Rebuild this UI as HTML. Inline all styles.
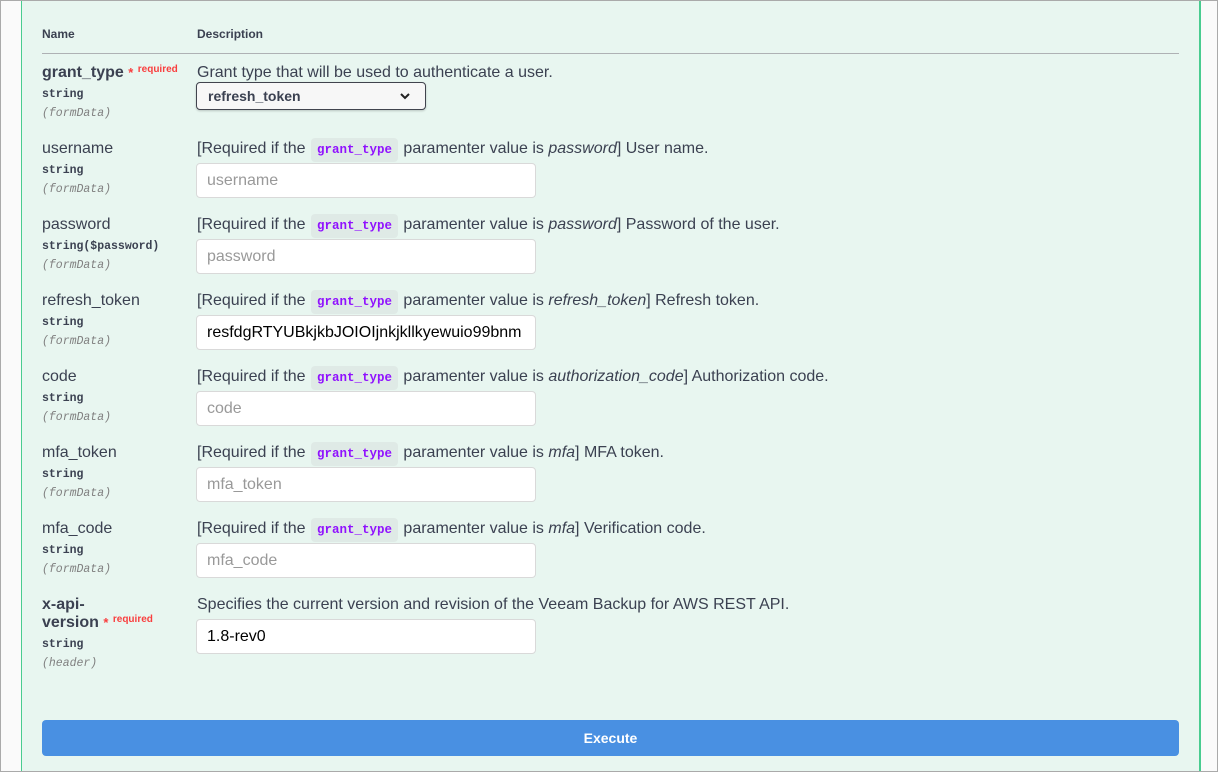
<!DOCTYPE html>
<html><head><style>
body{margin:0;width:1218px;height:772px;position:relative;overflow:hidden;background:#fafafa;font-family:"Liberation Sans",sans-serif;color:#3b4151}
.frame{position:absolute;left:0;top:0;width:1216px;height:770px;border:1px solid #aaa;}
.panel{position:absolute;left:21px;top:1px;width:1177px;height:770px;background:#e8f6f0;border-left:1px solid #49cc90;border-right:2px solid #49cc90}
.a{position:absolute;white-space:nowrap}
.h{font-size:12px;font-weight:bold;top:27px}
.nm{font-size:16px;left:42px}
.b{font-weight:bold}
.t{font-family:"Liberation Mono",monospace;font-size:11.5px;font-weight:bold;left:42px;color:#3b4151}
.f{font-family:"Liberation Mono",monospace;font-size:11.5px;font-style:italic;left:42px;color:#808080}
.d{font-size:16px;left:197px}
.code{display:inline-block;background:#dfeae6;border-radius:4px;padding:4px 6px;font-family:"Liberation Mono",monospace;font-size:12.5px;font-weight:bold;color:#9012fe;margin:0 1px;line-height:16px}
.in{position:absolute;left:196px;width:328px;height:33px;background:#fff;border:1px solid #d9d9d9;border-radius:4px;font-size:16px;padding-left:10px;line-height:33px;color:#999}
.v{color:#000}
.req{font-size:10px;color:#f93e3e;vertical-align:top}
.star{color:#f93e3e;font-size:13px}
</style></head><body>
<div class="frame"></div>
<div class="panel"></div>
<div class="a h" style="left:42px">Name</div>
<div class="a h" style="left:197px">Description</div>
<div class="a" style="left:42px;top:53px;width:1137px;height:1px;background:#aeb1b4"></div>

<div class="a nm b" style="top:64px">grant_type <span class="star">*</span> <span class="req">required</span></div>
<div class="a t" style="top:88px">string</div>
<div class="a f" style="top:107px">(formData)</div>
<div class="a d" style="top:64px">Grant type that will be used to authenticate a user.</div>
<div class="a" style="left:196px;top:82px;width:228px;height:26px;border:1px solid #41444e;border-radius:4px;background:#f7f7f7;box-shadow:0 1px 2px rgba(0,0,0,.2)"><span style="position:absolute;left:11px;top:5px;font-size:14px;font-weight:bold">refresh_token</span><svg style="position:absolute;left:202px;top:8px" width="12" height="10"><path d="M2 3 L6 7 L10 3" stroke="#222" stroke-width="2" fill="none"/></svg></div>

<div class="a nm" style="top:140px">username</div><div class="a t" style="top:164px">string</div><div class="a f" style="top:183px">(formData)</div>
<div class="a d" style="top:138px">[Required if the <span class="code">grant_type</span> paramenter value is <i>password</i>] User name.</div>
<div class="in" style="top:163px">username</div>

<div class="a nm" style="top:216px">password</div><div class="a t" style="top:240px">string($password)</div><div class="a f" style="top:259px">(formData)</div>
<div class="a d" style="top:214px">[Required if the <span class="code">grant_type</span> paramenter value is <i>password</i>] Password of the user.</div>
<div class="in" style="top:239px">password</div>

<div class="a nm" style="top:292px">refresh_token</div><div class="a t" style="top:316px">string</div><div class="a f" style="top:335px">(formData)</div>
<div class="a d" style="top:290px">[Required if the <span class="code">grant_type</span> paramenter value is <i>refresh_token</i>] Refresh token.</div>
<div class="in v" style="top:315px">resfdgRTYUBkjkbJOIOIjnkjkllkyewuio99bnm</div>

<div class="a nm" style="top:368px">code</div><div class="a t" style="top:392px">string</div><div class="a f" style="top:411px">(formData)</div>
<div class="a d" style="top:366px">[Required if the <span class="code">grant_type</span> paramenter value is <i>authorization_code</i>] Authorization code.</div>
<div class="in" style="top:391px">code</div>

<div class="a nm" style="top:444px">mfa_token</div><div class="a t" style="top:468px">string</div><div class="a f" style="top:487px">(formData)</div>
<div class="a d" style="top:442px">[Required if the <span class="code">grant_type</span> paramenter value is <i>mfa</i>] MFA token.</div>
<div class="in" style="top:467px">mfa_token</div>

<div class="a nm" style="top:520px">mfa_code</div><div class="a t" style="top:544px">string</div><div class="a f" style="top:563px">(formData)</div>
<div class="a d" style="top:518px">[Required if the <span class="code">grant_type</span> paramenter value is <i>mfa</i>] Verification code.</div>
<div class="in" style="top:543px">mfa_code</div>

<div class="a nm b" style="top:596px">x-api-</div>
<div class="a nm b" style="top:614px">version <span class="star">*</span> <span class="req">required</span></div>
<div class="a t" style="top:638px">string</div><div class="a f" style="top:657px">(header)</div>
<div class="a d" style="top:596px">Specifies the current version and revision of the Veeam Backup for AWS REST API.</div>
<div class="in v" style="top:619px">1.8-rev0</div>

<div class="a" style="left:42px;top:720px;width:1137px;height:36px;background:#4990e2;border-radius:4px;color:#fff;font-weight:bold;font-size:14px;text-align:center;line-height:36px">Execute</div>
</body></html>
